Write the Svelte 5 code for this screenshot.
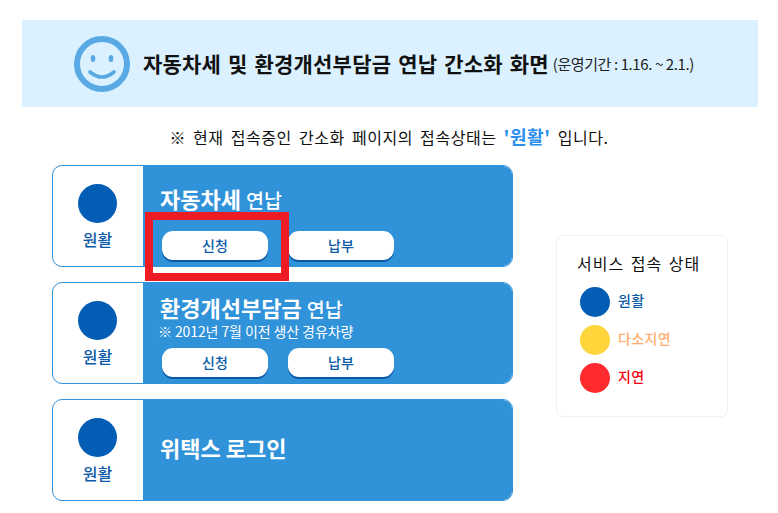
<script>
  const cards = [
    { title: "자동차세", rest: "연납", buttons: ["신청", "납부"], marked: true },
    { title: "환경개선부담금", rest: "연납", note: "※ 2012년 7월 이전 생산 경유차량", buttons: ["신청", "납부"] },
    { title: "위택스 로그인", rest: "", buttons: [] },
  ];
  const legend = [
    { label: "원활", cls: "good" },
    { label: "다소지연", cls: "slow" },
    { label: "지연", cls: "late" },
  ];
</script>

<div class="page">
  <header class="banner">
    <svg class="smile" width="58" height="58" viewBox="0 0 58 58">
      <circle cx="29" cy="29" r="25" fill="none" stroke="#58a9e4" stroke-width="6" />
      <ellipse cx="20" cy="23.500" rx="2.300" ry="3.600" fill="#58a9e4" />
      <ellipse cx="38" cy="23.500" rx="2.300" ry="3.600" fill="#58a9e4" />
      <path d="M17 37 Q29 47 41 37" fill="none" stroke="#58a9e4" stroke-width="3.600" stroke-linecap="round" />
    </svg>
    <h1>자동차세 및 환경개선부담금 연납 간소화 화면</h1>
    <span class="period">(운영기간 : 1.16. ~ 2.1.)</span>
  </header>

  <p class="notice">※ 현재 접속중인 간소화 페이지의 접속상태는 <b>'원활'</b> 입니다.</p>

  <div class="content">
    <div class="cards">
      {#each cards as card}
        <section class="card">
          <div class="status">
            <span class="dot good"></span>
            <span class="status-label">원활</span>
          </div>
          <div class="body" class:center={!card.buttons.length}>
            <h2>{card.title} <span>{card.rest}</span></h2>
            {#if card.note}<p class="note">{card.note}</p>{/if}
            {#if card.buttons.length}
              <div class="buttons" class:spaced={!card.note}>
                {#each card.buttons as b}
                  <button type="button">{b}</button>
                {/each}
              </div>
            {/if}
          </div>
          {#if card.marked}<div class="marker"></div>{/if}
        </section>
      {/each}
    </div>

    <aside class="legend">
      <h3>서비스 접속 상태</h3>
      {#each legend as item}
        <div class="legend-row">
          <span class="dot small {item.cls}"></span>
          <span class="legend-label {item.cls}">{item.label}</span>
        </div>
      {/each}
    </aside>
  </div>
</div>

<style>
  :global(body) {
    background: #fff;
    font-family: "Noto Sans CJK KR", "Noto Sans", sans-serif;
  }
  .page {
    width: 778px;
    height: 513px;
    padding-top: 20px;
    box-sizing: border-box;
    overflow: hidden;
  }
  .banner {
    margin: 0 20px 0 22px;
    height: 87px;
    background: #dbf1ff;
    display: flex;
    align-items: center;
    padding-left: 51px;
    box-sizing: border-box;
  }
  .smile {
    flex: none;
    margin-right: 12px;
  }
  h1 {
    margin: 0 0 2px;
    font-size: 21px;
    font-weight: 700;
    color: #111;
    letter-spacing: 0.2px;
    word-spacing: 2px;
    white-space: nowrap;
  }
  .period {
    margin-left: 4px;
    font-size: 15px;
    letter-spacing: -0.4px;
    color: #222;
    white-space: nowrap;
  }
  .notice {
    margin: 17px 0 0;
    height: 24px;
    line-height: 24px;
    text-align: center;
    font-size: 16px;
    letter-spacing: 0.55px;
    word-spacing: 3px;
    color: #111;
    white-space: nowrap;
  }
  .notice b {
    font-size: 18px;
    color: #2c8fef;
  }
  .content {
    display: flex;
    margin: 17px 0 0 52px;
  }
  .cards {
    width: 461px;
    display: flex;
    flex-direction: column;
    gap: 15px;
  }
  .card {
    position: relative;
    height: 102px;
    display: flex;
    border: 1px solid #3092d8;
    border-radius: 10px;
    box-sizing: border-box;
    overflow: visible;
  }
  .status {
    width: 90px;
    flex: none;
    display: flex;
    flex-direction: column;
    align-items: center;
    padding: 18px 1px 0 0;
    box-sizing: border-box;
  }
  .dot {
    display: block;
    width: 39px;
    height: 39px;
    border-radius: 50%;
  }
  .dot.small {
    width: 30px;
    height: 30px;
    flex: none;
  }
  .dot.good { background: #045db5; }
  .dot.slow { background: #ffd53c; }
  .dot.late { background: #ff2a2d; }
  .status-label {
    margin-top: 5px;
    font-size: 16px;
    line-height: 22px;
    font-weight: 500;
    color: #0a5aa8;
  }
  .body {
    flex: 1;
    background: #3092d8;
    border-radius: 0 9px 9px 0;
    padding: 0 0 6px 17px;
    color: #fff;
    display: flex;
    flex-direction: column;
    justify-content: flex-end;
  }
  .body.center {
    justify-content: center;
    padding-bottom: 4px;
  }
  h2 {
    margin: 0;
    font-size: 22px;
    line-height: 28px;
    font-weight: 700;
    white-space: nowrap;
  }
  h2 span {
    font-size: 19.500px;
    font-weight: 500;
  }
  .note {
    margin: 0 0 0 -2px;
    font-size: 14px;
    line-height: 17px;
    letter-spacing: -0.1px;
    white-space: nowrap;
  }
  .buttons {
    display: flex;
    gap: 20px;
    margin: 8px 0 0 2px;
  }
  .buttons.spaced {
    margin-top: 17px;
  }
  button {
    width: 106px;
    height: 29px;
    padding: 0 0 2px;
    border: none;
    border-radius: 11px;
    background: #fff;
    box-shadow: 0 2px 0 #0a5aa8;
    font-family: inherit;
    font-size: 14px;
    font-weight: 500;
    color: #0a5aa8;
  }
  .marker {
    position: absolute;
    left: 92px;
    top: 46px;
    width: 144px;
    height: 69px;
    border: 8px solid #ed1c24;
    box-sizing: border-box;
    pointer-events: none;
  }
  .legend {
    margin: 70px 0 0 43px;
    width: 172px;
    height: 182px;
    padding: 15px 0 0 20px;
    border: 1px solid #f0f0f0;
    border-radius: 7px;
    box-sizing: border-box;
  }
  h3 {
    margin: 0 0 12px;
    font-size: 16px;
    line-height: 24px;
    font-weight: 400;
    color: #111;
    letter-spacing: 1px;
    word-spacing: 2px;
    white-space: nowrap;
  }
  .legend-row {
    display: flex;
    align-items: center;
    gap: 8px;
    height: 30px;
    margin: 0 0 8px 3px;
  }
  .legend-label {
    font-size: 14px;
    font-weight: 500;
    letter-spacing: 0.4px;
    padding-bottom: 4px;
  }
  .legend-label.good { color: #0a5aa8; }
  .legend-label.slow { color: #ffae6e; }
  .legend-label.late { color: #f5000f; }
</style>
